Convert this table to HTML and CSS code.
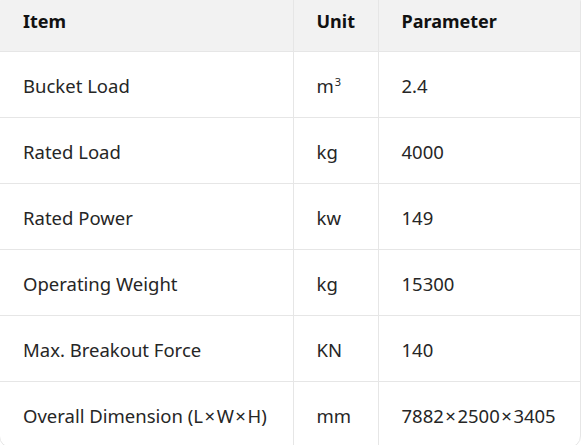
FILE: index.html
```html
<!DOCTYPE html>
<html lang="en">
<head>
<meta charset="utf-8">
<link rel="stylesheet" href="styles.css">
</head>
<body>
<div class="wrap">
<table class="spec">
  <thead>
    <tr><th class="c1">Item</th><th class="c2">Unit</th><th class="c3">Parameter</th></tr>
  </thead>
  <tbody>
    <tr><td>Bucket Load</td><td>m<sup>3</sup></td><td>2.4</td></tr>
    <tr><td>Rated Load</td><td>kg</td><td>4000</td></tr>
    <tr><td>Rated Power</td><td>kw</td><td>149</td></tr>
    <tr><td>Operating Weight</td><td>kg</td><td>15300</td></tr>
    <tr><td>Max. Breakout Force</td><td>KN</td><td>140</td></tr>
    <tr><td>Overall Dimension (L<span class="x">×</span>W<span class="x">×</span>H)</td><td>mm</td><td>7882<span class="x">×</span>2500<span class="x">×</span>3405</td></tr>
  </tbody>
</table>
</div>
</body>
</html>
```
FILE: styles.css
```css
html, body { margin: 0; padding: 0; background: #fff; }
body { font-family: "Noto Sans", "Open Sans", sans-serif; overflow: hidden; }
.wrap {
  width: 580px;
  margin: -10px 0 0 -1px;
  border: 1px solid #e6e6e6;
  border-radius: 12px;
  overflow: hidden;
}
.spec { width: 100%; border-collapse: collapse; table-layout: fixed; }
.c1 { width: 293px; }
.c2 { width: 85px; }
.spec th, .spec td {
  box-sizing: border-box;
  text-align: left;
  padding: 0 0 0 23px;
  border-left: 1px solid #e6e6e6;
  border-top: 1px solid #e6e6e6;
  white-space: nowrap;
}
.spec th:first-child, .spec td:first-child { border-left: none; }
.spec thead th {
  border-top: none;
  height: 60px;
  padding-top: 1px;
  background: #f2f2f2;
  font-size: 18px;
  font-weight: 700;
  color: #111;
}
.spec td {
  height: 66px;
  padding-top: 3px;
  font-size: 18.5px;
  color: #262626;
}
.spec .x { margin: 0 1.5px; }
.spec sup { font-size: 11px; vertical-align: 7px; line-height: 0; margin-left: 1px; }
```
